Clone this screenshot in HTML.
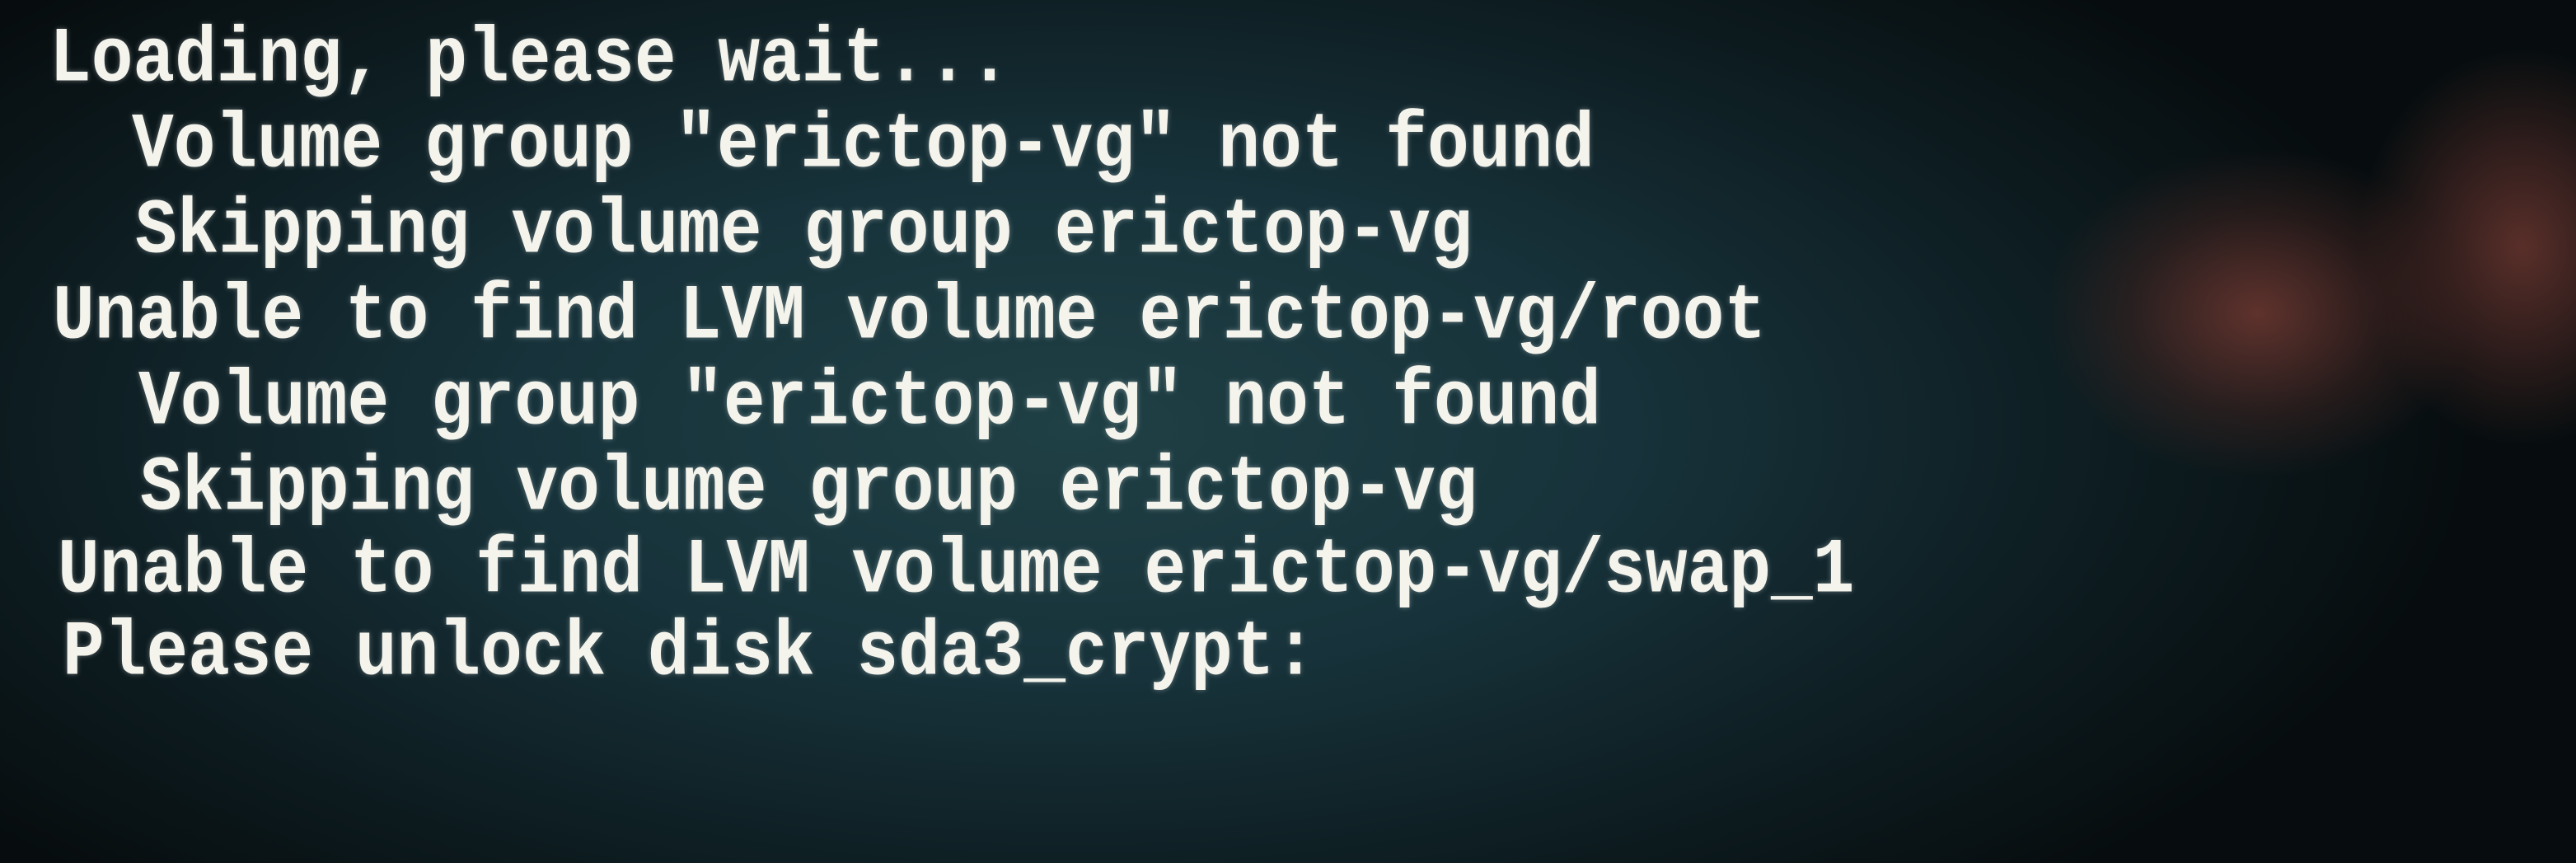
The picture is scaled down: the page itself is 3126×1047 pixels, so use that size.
<!DOCTYPE html>
<html><head><meta charset="utf-8"><style>
html,body{margin:0;padding:0}
body{width:3126px;height:1047px;overflow:hidden;position:relative;
background:
radial-gradient(ellipse 260px 200px at 2740px 380px, rgba(110,55,48,0.85), rgba(80,40,35,0.4) 60%, rgba(0,0,0,0) 100%),
radial-gradient(ellipse 200px 240px at 3060px 300px, rgba(110,55,48,0.8), rgba(0,0,0,0) 100%),
radial-gradient(ellipse 1700px 760px at 1300px 520px, #1f4045 0%, #17323a 40%, #0d1c20 75%, #070d0f 100%);
}
.t{position:absolute;font-family:"Liberation Mono",monospace;font-weight:bold;font-size:84.5px;color:#f4f4ec;white-space:pre;transform-origin:0 0;transform:scaleY(1.12);text-shadow:0 0 6px rgba(255,255,255,0.35)}
</style></head><body>
<div class="t" style="left:60px;top:20px">Loading, please wait...</div>
<div class="t" style="left:160px;top:124px">Volume group "erictop-vg" not found</div>
<div class="t" style="left:164px;top:228px">Skipping volume group erictop-vg</div>
<div class="t" style="left:64px;top:332px">Unable to find LVM volume erictop-vg/root</div>
<div class="t" style="left:168px;top:436px">Volume group "erictop-vg" not found</div>
<div class="t" style="left:170px;top:540px">Skipping volume group erictop-vg</div>
<div class="t" style="left:70px;top:640px">Unable to find LVM volume erictop-vg/swap_1</div>
<div class="t" style="left:76px;top:740px">Please unlock disk sda3_crypt:</div>
</body></html>
